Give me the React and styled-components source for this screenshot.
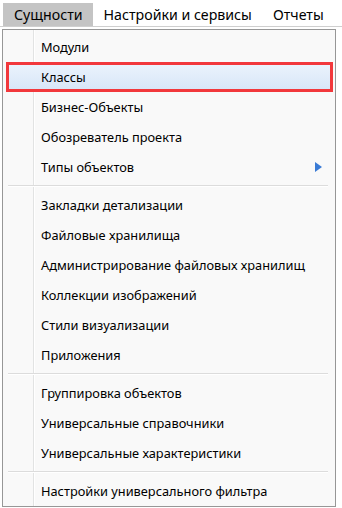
import React from 'react';
import styled, { createGlobalStyle } from 'styled-components';

const GlobalStyle = createGlobalStyle`
  body {
    margin: 0;
    background: #ffffff;
    font-family: "Noto Sans", "Liberation Sans", sans-serif;
  }
`;

const groups = [
  [
    { label: 'Модули' },
    { label: 'Классы', active: true },
    { label: 'Бизнес-Объекты' },
    { label: 'Обозреватель проекта' },
    { label: 'Типы объектов', submenu: true },
  ],
  [
    { label: 'Закладки детализации' },
    { label: 'Файловые хранилища' },
    { label: 'Администрирование файловых хранилищ' },
    { label: 'Коллекции изображений' },
    { label: 'Стили визуализации' },
    { label: 'Приложения' },
  ],
  [
    { label: 'Группировка объектов' },
    { label: 'Универсальные справочники' },
    { label: 'Универсальные характеристики' },
  ],
  [{ label: 'Настройки универсального фильтра' }],
];

const App = () => {
  return (
    <Page>
      <GlobalStyle />
      <MenuBar>
        <TopItem $open>Сущности</TopItem>
        <TopItem>Настройки и сервисы</TopItem>
        <TopItem>Отчеты</TopItem>
      </MenuBar>
      <Dropdown>
        {groups.map((group, gi) => (
          <React.Fragment key={gi}>
            {gi > 0 && <Separator />}
            {group.map((item) => (
              <Item key={item.label} $active={item.active}>
                <span>{item.label}</span>
                {item.submenu && (
                  <Arrow viewBox="0 0 7 10" width="7" height="10">
                    <path d="M0 0 L7 5 L0 10 Z" fill="#3a7bd5" />
                  </Arrow>
                )}
              </Item>
            ))}
          </React.Fragment>
        ))}
      </Dropdown>
    </Page>
  );
};

export default App;

const Page = styled.div`
  width: 342px;
  height: 508px;
  overflow: hidden;
`;

const MenuBar = styled.nav`
  display: flex;
  align-items: stretch;
  height: 23px;
  padding: 3px 0 0 3px;
  border-bottom: 1px solid #cfcfcf;
  margin-bottom: 2px;
`;

const TopItem = styled.div`
  display: flex;
  align-items: center;
  padding: 0 10px 0 11px;
  font-size: 14.2px;
  white-space: nowrap;
  color: #000;
  background: ${(p) => (p.$open ? '#c4c4c4' : 'transparent')};
`;

const Dropdown = styled.div`
  margin-left: 2px;
  width: 332px;
  border: 1px solid #979797;
  padding: 2px 0 0;
  background: linear-gradient(
    to right,
    #f9f9f9 0,
    #f9f9f9 30px,
    #e2e3e3 30px,
    #e2e3e3 31px,
    #ffffff 31px,
    #ffffff 32px,
    #f9f9f9 32px
  );
`;

const Item = styled.div`
  display: flex;
  align-items: center;
  justify-content: space-between;
  box-sizing: border-box;
  height: 30px;
  margin: 0 2px 0 3px;
  padding: 0 11px 0 ${(p) => (p.$active ? '32px' : '35px')};
  font-size: 12.8px;
  white-space: nowrap;
  color: #000;
  ${(p) =>
    p.$active &&
    `
    border: 3px solid #f2383c;
    background: linear-gradient(to bottom, #eaf2fc, #d8e6f8);
  `}
`;

const Arrow = styled.svg`
  display: block;
`;

const Separator = styled.div`
  height: 8px;
  margin: 0 7px 0 5px;
  background: linear-gradient(
    to bottom,
    transparent 3px,
    #dcdcdc 3px,
    #dcdcdc 4px,
    #ffffff 4px,
    #ffffff 5px,
    transparent 5px
  );
`;
